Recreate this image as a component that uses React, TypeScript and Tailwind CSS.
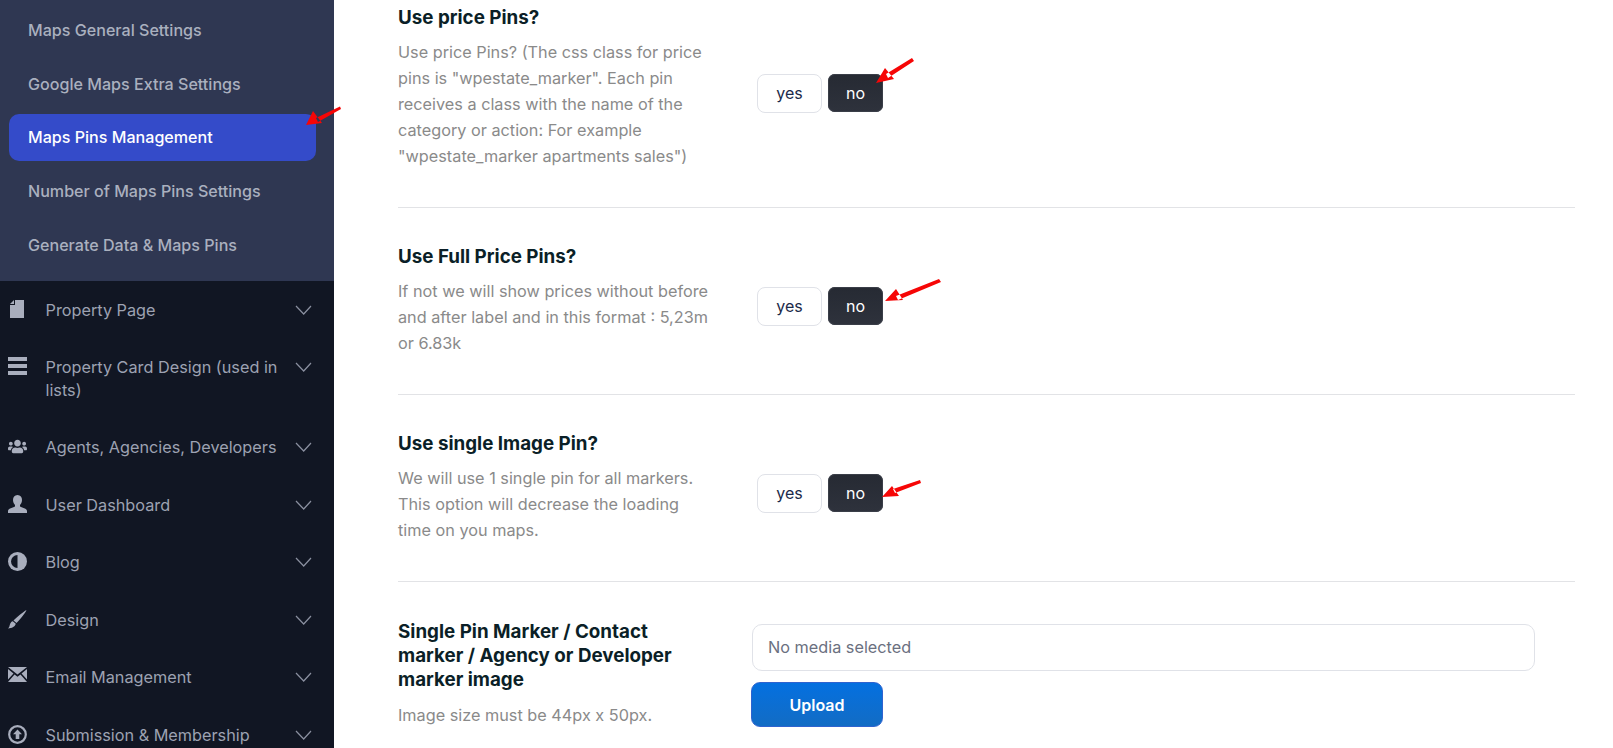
import React from "react";
import { FaUsers } from "react-icons/fa";

const font = { fontFamily: "Inter, 'Liberation Sans', sans-serif" };

const Chevron = () => (
  <svg width="18" height="10" viewBox="0 0 18 10" fill="none" stroke="#8b90a0" strokeWidth="1.2" className="shrink-0 mt-[6px]">
    <path d="M1 1l7.7 8L16 1" />
  </svg>
);

const icons: Record<string, React.ReactNode> = {
  page: (
    <svg width="14" height="18" viewBox="0 0 14 18" fill="#a9aebd" className="ml-[2px]"><path d="M5 0h9v18H0V5h5zM4 0v4H0z" /></svg>
  ),
  bars: (
    <svg width="19" height="18" viewBox="0 0 19 18" fill="#a9aebd"><path d="M0 0h19v4H0zM0 7h19v4H0zM0 14h19v4H0z" /></svg>
  ),
  users: <FaUsers size={19} color="#a9aebd" />,
  user: (
    <svg width="19" height="18" viewBox="0 0 19 18" fill="#a9aebd"><path d="M9.5 0c3 0 4.5 2.2 4.5 5 0 2-1 4-2 5v1.500c2 1 7 2 7 4.500v2H0v-2c0-2.500 5-3.500 7-4.500V10C6 9 5 7 5 5c0-2.800 1.500-5 4.500-5z" /></svg>
  ),
  half: (
    <svg width="19" height="19" viewBox="0 0 19 19"><circle cx="9.500" cy="9.500" r="9.500" fill="#a9aebd" /><path d="M9.500 3a6.500 6.500 0 0 0 0 13z" fill="#111623" /></svg>
  ),
  brush: (
    <svg width="19" height="19" viewBox="0 0 19 19" fill="#a9aebd"><path d="M18.500 0C17 3.500 12.500 9 8.500 13L5.500 10.500C9.500 6.500 15 2 18.500 0zM4.800 11.300l3 2.500C7 16.500 4 18.500 0 18.500c1.500-1 1.500-2.800 2-4.200.5-1.500 1.500-2.800 2.800-3z" /></svg>
  ),
  mail: (
    <svg width="19" height="15" viewBox="0 0 19 15" fill="#a9aebd"><path d="M0 0h19L9.500 7.500zM0 2l5.500 4.500L0 12.500zM19 2l-5.500 4.500 5.500 6zM6.500 7.500l3 2.300 3-2.300L19 15H0z" /></svg>
  ),
  upload: (
    <svg width="19" height="19" viewBox="0 0 19 19"><circle cx="9.500" cy="9.500" r="8.300" fill="none" stroke="#a9aebd" strokeWidth="2.200" /><path d="M9.500 4.500l4.500 4.700h-2.700V14H7.700V9.200H5z" fill="#a9aebd" /></svg>
  ),
};

const subItems = ["Maps General Settings", "Google Maps Extra Settings", "Maps Pins Management", "Number of Maps Pins Settings", "Generate Data & Maps Pins"];

const menu = [
  { icon: "page", label: "Property Page", h: "h-[57px]" },
  { icon: "bars", label: "Property Card Design (used in lists)", h: "h-[80px]" },
  { icon: "users", label: "Agents, Agencies, Developers", h: "h-[58px]" },
  { icon: "user", label: "User Dashboard", h: "h-[57px]" },
  { icon: "half", label: "Blog", h: "h-[58px]" },
  { icon: "brush", label: "Design", h: "h-[57px]" },
  { icon: "mail", label: "Email Management", h: "h-[58px]" },
  { icon: "upload", label: "Submission & Membership", h: "h-[58px]" },
];

function Toggle() {
  return (
    <div className="flex items-center gap-[6px] text-[16px] leading-none">
      <button className="w-[65px] h-[39px] bg-white border border-[#e0e2e8] rounded-[8px] text-[#1c2b4a]">yes</button>
      <button className="w-[55px] h-[38px] rounded-[7px] text-white bg-gradient-to-b from-[#262a33] to-[#2e323c] shadow-[0_0_0_1px_#3a3e48_inset]">no</button>
    </div>
  );
}

function Row({ title, lines, pt }: { title: string; lines: string[]; pt: string }) {
  return (
    <div className={`flex border-b border-[#e2e3e6] pb-[38px] ${pt}`}>
      <div className="w-[359px] shrink-0">
        <h3 className="text-[18.800px] leading-[24px] font-bold text-[#0b1f27]">{title}</h3>
        <p className="mt-[9px] text-[16.250px] leading-[26px] text-[#8a8a8a]">
          {lines.map((l) => (
            <span key={l} className="block whitespace-nowrap">{l}</span>
          ))}
        </p>
      </div>
      <div className="flex items-center pt-[11px]">
        <Toggle />
      </div>
    </div>
  );
}

export default function App() {
  return (
    <div className="relative flex h-[748px] w-[1613px] overflow-hidden bg-white" style={font}>
      <aside className="w-[334px] shrink-0 flex flex-col bg-[#111623]">
        <div className="h-[281px] shrink-0 bg-[#2f3752] flex flex-col pt-[3px] pl-[9px] pr-[18px]">
          {subItems.map((s, i) => (
            <div
              key={s}
              className={`flex items-center pl-[19px] text-[16.100px] font-medium shrink-0 ${i === 2 ? "h-[47px] my-[3px] bg-[#344bc9] rounded-[10px] text-white" : "h-[54px] text-[#aab0bf]"}`}
            >
              {s}
            </div>
          ))}
        </div>
        <div className="flex flex-col">
          {menu.map((m) => (
            <div key={m.label} className={`flex items-start pt-[18px] ${m.h} pl-[8px] pr-[21px]`}>
              <span className="w-[37.500px] shrink-0 flex pt-[1px]">{icons[m.icon]}</span>
              <span className="flex-1 pr-[14px] text-[16.250px] leading-[23px] font-normal text-[#9da2b2]">{m.label}</span>
              <Chevron />
            </div>
          ))}
        </div>
      </aside>

      <main className="flex-1 min-w-0 pl-[64px] pr-[38px]">
        <Row
          pt="pt-[6px]"
          title="Use price Pins?"
          lines={[
            "Use price Pins? (The css class for price",
            'pins is "wpestate_marker". Each pin',
            "receives a class with the name of the",
            "category or action: For example",
            '"wpestate_marker apartments sales")',
          ]}
        />
        <Row
          pt="pt-[37px]"
          title="Use Full Price Pins?"
          lines={["If not we will show prices without before", "and after label and in this format : 5,23m", "or 6.83k"]}
        />
        <Row
          pt="pt-[37px]"
          title="Use single Image Pin?"
          lines={["We will use 1 single pin for all markers.", "This option will decrease the loading", "time on you maps."]}
        />
        <div className="flex pt-[38px]">
          <div className="w-[353px] shrink-0">
            <h3 className="text-[18.800px] leading-[24.200px] font-bold text-[#0b1f27] w-[290px]">Single Pin Marker / Contact marker / Agency or Developer marker image</h3>
            <p className="mt-[9px] text-[16.250px] leading-[26px] text-[#8a8a8a]">Image size must be 44px x 50px.</p>
          </div>
          <div className="flex-1 pr-[40px] pt-[4px]">
            <div className="h-[47px] w-[783px] flex items-center pl-[15px] text-[16.250px] text-[#6b7080] border border-[#e0e2e8] rounded-[10px] ml-[1px]">No media selected</div>
            <button className="mt-[11px] w-[132px] h-[45px] rounded-[9px] text-white font-semibold text-[16px] bg-gradient-to-b from-[#0470e0] to-[#126cc4] border border-[#2f63cf]">Upload</button>
          </div>
        </div>
      </main>

      <svg className="absolute inset-0 pointer-events-none" width="1613" height="748" viewBox="0 0 1613 748" fill="#f60606">
        <path d="M340 106.500l-24 11.500 2 4 23-13z M306 125l7-14 9 12z" />
        <path d="M912 58l-26 16 2 4 26-17z M876 83l9-15 9 11z" />
        <path d="M939 279l-43 17 2 4 43-18z M885 301l11-12 7 11z" />
        <path d="M920 480l-27 9 2 4 26-10z M882 497l10-11 7 10z" />
      </svg>
    </div>
  );
}
